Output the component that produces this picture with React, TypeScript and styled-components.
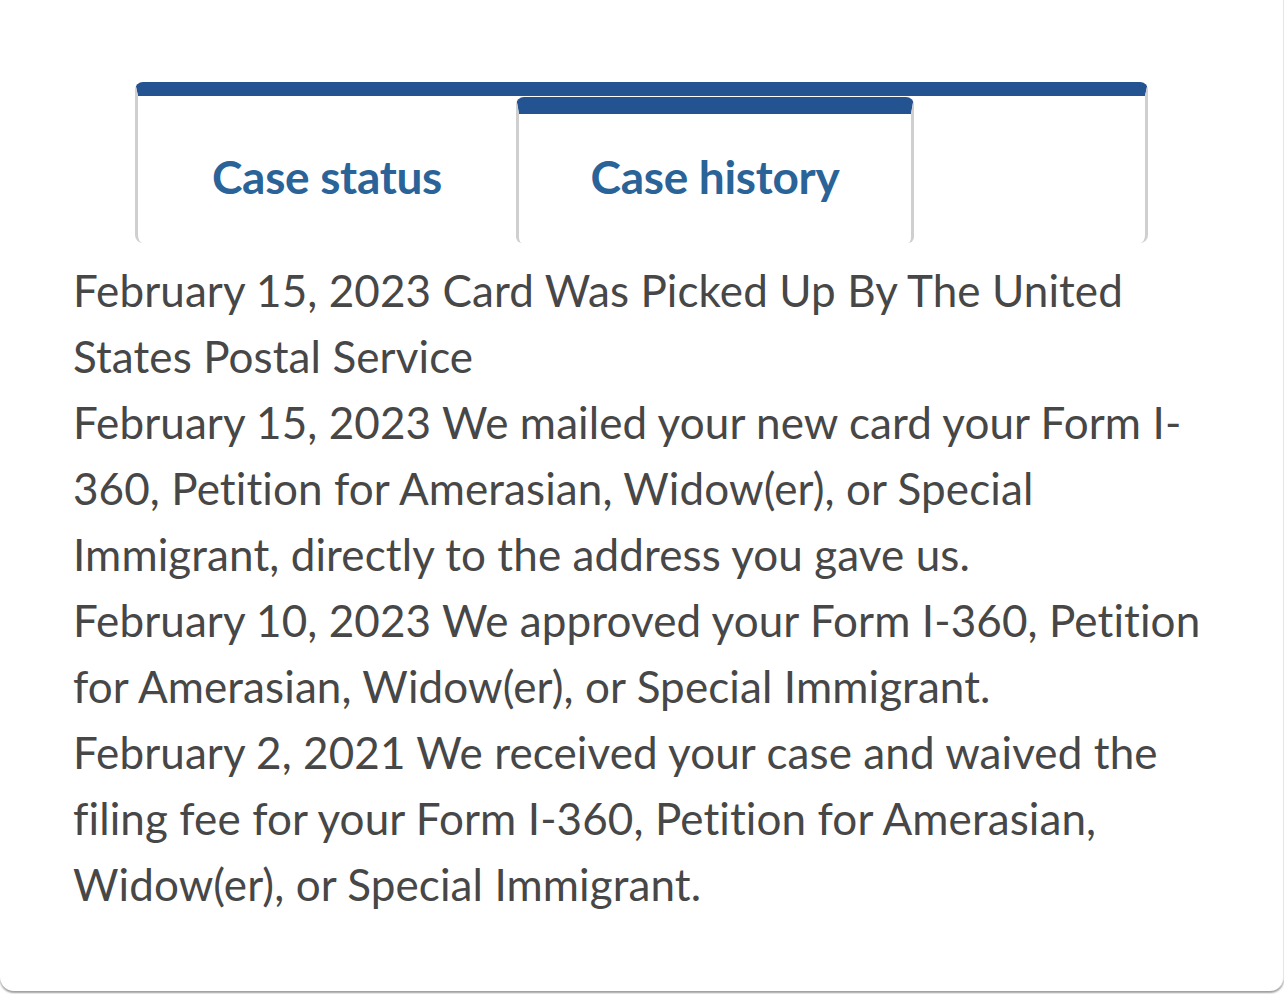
import React from "react";
import styled, { createGlobalStyle } from "styled-components";

const Global = createGlobalStyle`
  html, body { margin: 0; padding: 0; background: #ffffff; }
  body { font-family: Lato, "Liberation Sans", sans-serif; }
`;

const Page = styled.div`
  width: 1284px;
  height: 994px;
  overflow: hidden;
  background: #ffffff;
`;

const Card = styled.section`
  box-sizing: border-box;
  width: 1284px;
  height: 991px;
  padding: 82px 0 0 73px;
  background: #ffffff;
  border-right: 1px solid #e6e6e6;
  border-radius: 0 0 14px 14px;
  box-shadow: 0 2px 2px rgba(0, 0, 0, 0.38);
`;

const TabList = styled.div`
  box-sizing: border-box;
  display: flex;
  width: 1013px;
  height: 161px;
  margin-left: 62px;
  border-top: 14px solid #245391;
  border-left: 3px solid #cfcfcf;
  border-right: 3px solid #cfcfcf;
  border-radius: 8px;
`;

const Tab = styled.div<{ $active?: boolean; $w: number }>`
  box-sizing: border-box;
  flex: 0 0 ${(p) => p.$w}px;
  display: flex;
  align-items: center;
  justify-content: center;
  border-top: ${(p) => (p.$active ? "17px solid #245391" : "0")};
  border-left: ${(p) => (p.$active ? "3px solid #cfcfcf" : "0")};
  border-right: ${(p) => (p.$active ? "3px solid #cfcfcf" : "0")};
  border-radius: ${(p) => (p.$active ? "8px 8px 6px 6px" : "0")};
  margin-top: ${(p) => (p.$active ? "1px" : "0")};
  color: #2a6398;
  font-family: Lato, "Liberation Sans", sans-serif;
  font-weight: 700;
  font-size: 46px;
  letter-spacing: -0.3px;
`;

const TabLabel = styled.span<{ $shift: number }>`
  position: relative;
  top: ${(p) => p.$shift}px;
`;

const History = styled.div`
  padding-top: 14px;
  color: #474747;
  font-family: Lato, "Liberation Sans", sans-serif;
  font-size: 44px;
  line-height: 66px;
  letter-spacing: 0.1px;
`;

const Entry = styled.p`
  margin: 0;
`;

const Line = styled.span`
  display: block;
  white-space: nowrap;
`;

const entries: string[][] = [
  ["February 15, 2023 Card Was Picked Up By The United", "States Postal Service"],
  [
    "February 15, 2023 We mailed your new card your Form I-",
    "360, Petition for Amerasian, Widow(er), or Special",
    "Immigrant, directly to the address you gave us.",
  ],
  [
    "February 10, 2023 We approved your Form I-360, Petition",
    "for Amerasian, Widow(er), or Special Immigrant.",
  ],
  [
    "February 2, 2021 We received your case and waived the",
    "filing fee for your Form I-360, Petition for Amerasian,",
    "Widow(er), or Special Immigrant.",
  ],
];

export default function App() {
  return (
    <Page>
      <Global />
      <Card>
        <TabList role="tablist">
          <Tab $w={378}>
            <TabLabel $shift={7}>Case status</TabLabel>
          </Tab>
          <Tab $w={398} $active>
            <TabLabel $shift={-2}>Case history</TabLabel>
          </Tab>
        </TabList>
        <History>
          {entries.map((lines, i) => (
            <Entry key={i}>
              {lines.map((l, j) => (
                <Line key={j}>{l}</Line>
              ))}
            </Entry>
          ))}
        </History>
      </Card>
    </Page>
  );
}
